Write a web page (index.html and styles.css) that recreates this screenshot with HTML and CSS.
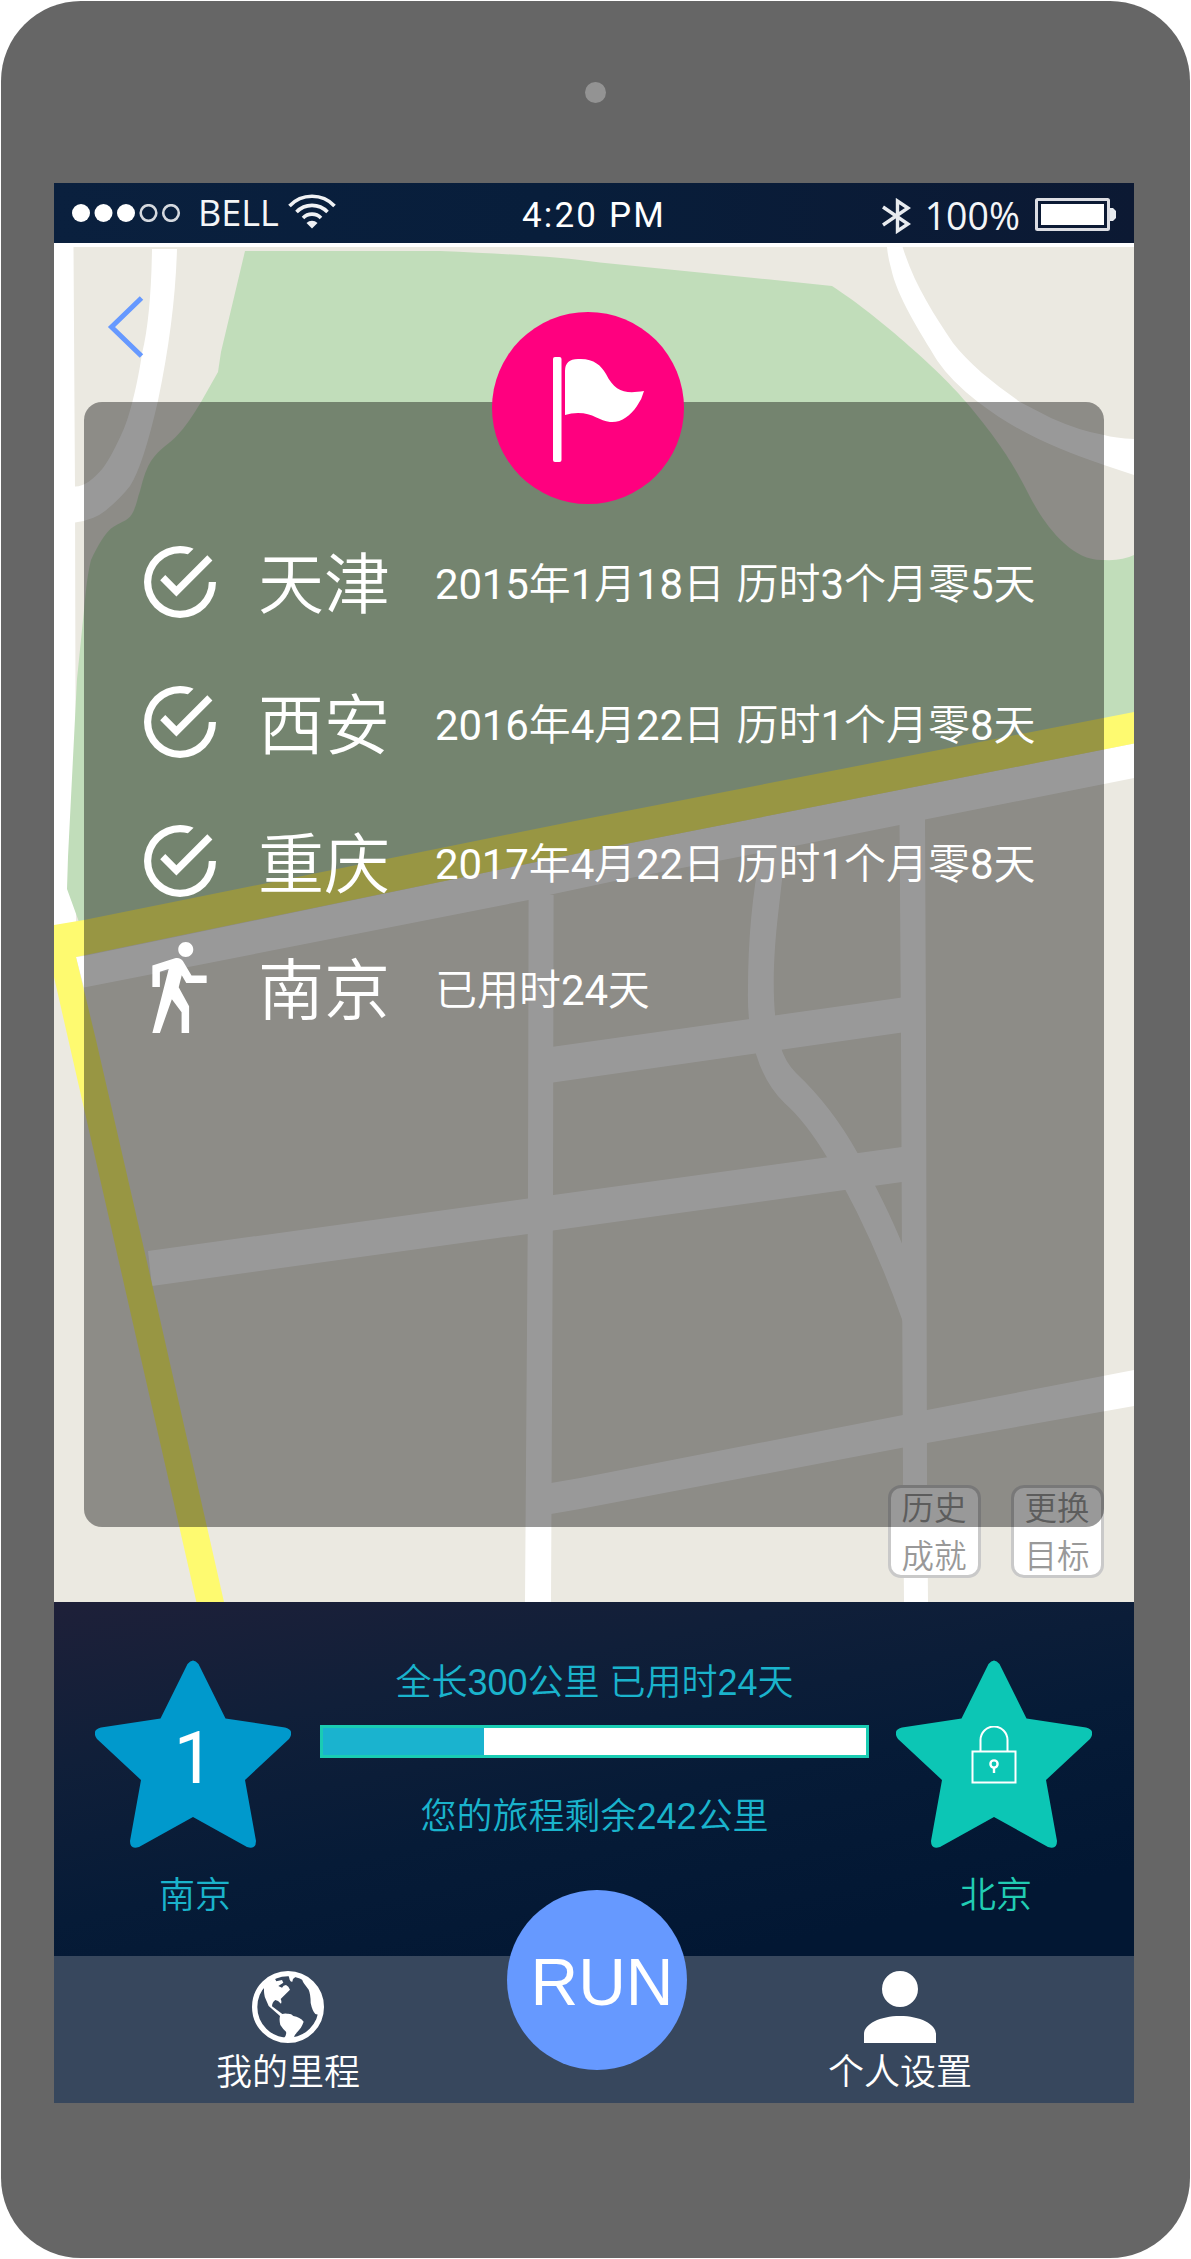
FILE: index.html
```html
<!DOCTYPE html>
<html lang="zh-CN">
<head>
<meta charset="utf-8">
<title>历史成就</title>
<link rel="stylesheet" href="styles.css">
</head>
<body>
<div class="phone">
  <span class="camera"></span>
  <main class="screen">
    <header class="status">
      <div class="status-left">
        <svg class="signal" width="110" height="18" viewBox="0 0 110 18">
          <g fill="#fff"><circle cx="9" cy="9" r="9"/><circle cx="31.500" cy="9" r="9"/><circle cx="54" cy="9" r="9"/></g>
          <g fill="none" stroke="#d5d9df" stroke-width="2.600"><circle cx="76.500" cy="9" r="7.800"/><circle cx="99" cy="9" r="7.800"/></g>
        </svg>
        <span class="carrier">BELL</span>
        <svg class="wifi" width="48" height="36" viewBox="0 0 48 36">
          <g fill="none" stroke="#f0f2f5" stroke-width="3.600">
            <path d="M1.500 13A31 31 0 0 1 46.500 13"/><path d="M8.500 19A21.500 21.500 0 0 1 39.500 19"/><path d="M15 25A12.500 12.500 0 0 1 33 25"/>
          </g>
          <path d="M24 35.500L18.500 30A8 8 0 0 1 29.500 30Z" fill="#f0f2f5"/>
        </svg>
      </div>
      <div class="time">4:20 PM</div>
      <div class="status-right">
        <svg class="bluetooth" width="30" height="36" viewBox="0 0 30 36"><path d="M2 9L27 26L16.500 33V3L27 10L2 27" fill="none" stroke="#e8ebef" stroke-width="3.400"/></svg>
        <span class="percent">100%</span>
        <svg class="battery" width="81" height="33" viewBox="0 0 81 33">
          <rect x="1.500" y="1.500" width="72" height="30" rx="1" fill="none" stroke="#dcdde3" stroke-width="3"/>
          <rect x="6" y="6" width="63" height="21" fill="#fff"/>
          <path d="M75 10H78L81 13V20L78 23H75Z" fill="#e8ebef"/>
        </svg>
      </div>
    </header>

    <section class="map">
      <svg class="map-art" viewBox="54 243 1080 1359" width="1080" height="1359">
        <rect x="54" y="243" width="1080" height="1359" fill="#ebe9e1"/>
        <path d="M54 243H1134V247H73.500L75 490L76 930L54 930Z" fill="#fff"/>
        <path d="M245 251H440C510 254 560 257 600 262.500L770 279.600L832 286C880 317 945 376 966 402C1000 442 1015 467 1028 493C1042 521 1070 562 1104 560Q1122 561 1134 555V720L79 922L67 889L68 857L77 679L84 610Q87 575 91 560C98 545 105 534 111 528.600C119 522 127 522 132 514C137 505 137 499 140 491Q145 470 151 461C160 448 170 444 178 434.600Q188 424 201 402L218 372L221 352Z" fill="#c1ddba"/>
        <g fill="#fff">
          <path d="M152 249Q151 317 142 353.600C138 382 130 415 124 428.600Q112 456 103 468Q87 487 75 486.500V522.500Q94 520 105 511Q120 499 130 486Q143 466 157.700 402Q175 320 177 249Z"/>
          <path d="M887 247Q888 258 891 268C897 297 920 332 937.500 361Q951 381 978 402C1018 433 1060 450 1104 465L1134 475V439Q1115 438 1104 435Q1080 431 1051 418L1020 402Q1001 389 982 373Q963 356 953 343C933 313 914 284 902.600 247Z"/>
          <path d="M84 956L580 853L1134 743.600V778L1104 784L925 819.600L899.500 825L751 854.600L610 882L553.600 894L528.600 900L84 987.500L76 957Z"/>
          <path d="M528.600 895H553.600L553 1193L551 1602H525L528 1193Z"/>
          <path d="M899.500 820L925 815L926 1040L927 1480L928 1602H904L903 1480L901 1040Z"/>
          <path d="M553 1046.700L902 997.500V1032.500L553 1082.500Z"/>
          <path d="M148 1251L902 1147V1182L152 1286Z"/>
          <path d="M551 1483L580 1478L903 1415L927 1410L1134 1370V1406L927 1443L580 1509L551 1514Z"/>
          <path d="M761 850Q748 915 748 989Q747 1026 756 1054Q765 1084 785 1103.600Q805 1121 827.500 1158Q870 1229 903 1322V1246Q886 1204 857.500 1153Q832 1107 796 1073Q785 1062 780 1045C770 1005 774 951 778 915L786 845Z"/>
        </g>
        <path d="M54 925L84 920L580 820L1134 712V743.600L580 853L76 957L96 1040L152.500 1286L207 1527L224 1602H196.400L84 1108.400L54 977Z" fill="#fefa70"/>
      </svg>

      <svg class="back" width="40" height="62" viewBox="0 0 40 62"><path d="M35.500 2L5.500 31L35.500 60" fill="none" stroke="#6699ff" stroke-width="5"/></svg>

      <div class="map-actions">
        <button class="map-button">历史<br>成就</button>
        <button class="map-button">更换<br>目标</button>
      </div>

      <div class="card">
        <div class="flag-badge">
          <svg width="94" height="108" viewBox="0 0 94 108">
            <rect x="1" y="2" width="8.500" height="105" rx="2" fill="#fff"/>
            <path d="M13 16Q13 4 26 4C41 3 49 10 54 19C63 37 73 39 92 36Q90 44 85 51C78 61 69 68 58 67C48 66 41 58 26 58Q19 58 13 60Z" fill="#fff"/>
          </svg>
        </div>
        <ul class="trips">
          <li class="trip">
            <svg class="check" viewBox="2 2 20 20"><path d="M20,12A8,8 0 0,1 12,20A8,8 0 0,1 4,12A8,8 0 0,1 12,4C12.760,4 13.500,4.110 14.200,4.310L15.770,2.740C14.610,2.260 13.340,2 12,2A10,10 0 0,0 2,12A10,10 0 0,0 12,22A10,10 0 0,0 22,12M7.910,10.080L6.500,11.500L11,16L21,6L19.590,4.580L11,13.170Z"/></svg>
            <span class="city">天津</span><span class="date"><span class="num">2015</span>年<span class="num">1</span>月<span class="num">18</span>日 历时<span class="num">3</span>个月零<span class="num">5</span>天</span>
          </li>
          <li class="trip">
            <svg class="check" viewBox="2 2 20 20"><path d="M20,12A8,8 0 0,1 12,20A8,8 0 0,1 4,12A8,8 0 0,1 12,4C12.760,4 13.500,4.110 14.200,4.310L15.770,2.740C14.610,2.260 13.340,2 12,2A10,10 0 0,0 2,12A10,10 0 0,0 12,22A10,10 0 0,0 22,12M7.910,10.080L6.500,11.500L11,16L21,6L19.590,4.580L11,13.170Z"/></svg>
            <span class="city">西安</span><span class="date"><span class="num">2016</span>年<span class="num">4</span>月<span class="num">22</span>日 历时<span class="num">1</span>个月零<span class="num">8</span>天</span>
          </li>
          <li class="trip">
            <svg class="check" viewBox="2 2 20 20"><path d="M20,12A8,8 0 0,1 12,20A8,8 0 0,1 4,12A8,8 0 0,1 12,4C12.760,4 13.500,4.110 14.200,4.310L15.770,2.740C14.610,2.260 13.340,2 12,2A10,10 0 0,0 2,12A10,10 0 0,0 12,22A10,10 0 0,0 22,12M7.910,10.080L6.500,11.500L11,16L21,6L19.590,4.580L11,13.170Z"/></svg>
            <span class="city">重庆</span><span class="date"><span class="num">2017</span>年<span class="num">4</span>月<span class="num">22</span>日 历时<span class="num">1</span>个月零<span class="num">8</span>天</span>
          </li>
          <li class="trip">
            <svg class="walk" viewBox="6 0.200 13 21.800"><path d="M14.120,10H19V8.200H15.380L13.380,4.870C13.080,4.370 12.540,4.030 11.920,4.030C11.740,4.030 11.580,4.060 11.420,4.110L6,5.800V11H7.800V7.330L9.910,6.670L6,22H7.800L10.670,13.890L13,17V22H14.800V15.590L12.310,11.050L13.040,8.180M14,3.800C15,3.800 15.800,3 15.800,2C15.800,1 15,0.200 14,0.200C13,0.200 12.200,1 12.200,2C12.200,3 13,3.800 14,3.800Z"/></svg>
            <span class="city">南京</span><span class="date">已用时<span class="num">24</span>天</span>
          </li>
        </ul>
      </div>
    </section>

    <section class="journey">
      <div class="stop stop-from">
        <div class="star">
          <svg class="star-shape" viewBox="0 0 196 188"><path d="M92.500 4Q98 -3 103.500 4L130.500 58.500L190 67.500Q200 70 194 79L150 120L161 181Q161 190 152 187L98 157L44 187Q35 190 35 181L46 120L2 79Q-4 70 6 67.500L65.500 58.500Z"/></svg>
          <span class="star-number">1</span>
        </div>
        <div class="stop-name">南京</div>
      </div>
      <div class="progress">
        <div class="progress-text">全长300公里 已用时24天</div>
        <div class="bar"><div class="bar-fill"></div></div>
        <div class="progress-text rest">您的旅程剩余242公里</div>
      </div>
      <div class="stop stop-to">
        <div class="star">
          <svg class="star-shape" viewBox="0 0 196 188"><path d="M92.500 4Q98 -3 103.500 4L130.500 58.500L190 67.500Q200 70 194 79L150 120L161 181Q161 190 152 187L98 157L44 187Q35 190 35 181L46 120L2 79Q-4 70 6 67.500L65.500 58.500Z"/></svg>
          <svg class="lock" width="46" height="58" viewBox="0 0 46 58"><g fill="none" stroke="#fff" stroke-width="2"><rect x="1.500" y="25.500" width="43" height="31"/><path d="M9.500 25V14A13.500 13.500 0 0 1 36.500 14V25"/><circle cx="23" cy="38" r="3.600" stroke-width="2.400"/><path d="M23 41.500V47" stroke-width="2.400"/></g></svg>
        </div>
        <div class="stop-name">北京</div>
      </div>
    </section>

    <nav class="tabs">
      <a class="tab tab-miles">
        <svg class="tab-icon" viewBox="12 12 216 216">
          <circle cx="120" cy="120" r="100" fill="none" stroke="#fff" stroke-width="16"/>
          <g fill="#fff">
            <path d="M46 58L70 38L95 26H122L125 38Q128 46 133 44L135 36L145 28L120 18L80 22L52 44ZM48 56Q47 82 52 94L62 117L96 147Q93 158 97 174Q106 188 114 194Q117 204 106 216H136Q138 204 148 195Q160 183 163 174L167 164Q156 150 136 147Q130 139 118 140Q108 139 103 141L72 118Q72 106 82 99Q90 100 99 110Q102 104 98 96L126 68Q122 57 114 54Q106 54 102 62L91 57L106 47L102 39L85 43L80 34Z"/>
            <path d="M161 30Q163 42 167 48L182 68Q188 82 188 108Q193 132 202 141L214 144L222 110L212 76L188 44Z"/>
          </g>
        </svg>
        <span>我的里程</span>
      </a>
      <a class="tab tab-me">
        <svg class="tab-icon" viewBox="4 4 16 16"><path fill="#fff" d="M12,4A4,4 0 0,1 16,8A4,4 0 0,1 12,12A4,4 0 0,1 8,8A4,4 0 0,1 12,4M12,14C16.420,14 20,15.790 20,18V20H4V18C4,15.790 7.580,14 12,14Z"/></svg>
        <span>个人设置</span>
      </a>
      <button class="run">RUN</button>
    </nav>
  </main>
</div>
</body>
</html>
```
FILE: styles.css
```css
* { box-sizing: border-box; }

body {
  margin: 0;
  background: #fff;
  font-family: "Liberation Sans", "Noto Sans CJK SC", sans-serif;
  font-weight: 350;
}

button {
  font: inherit;
  padding: 0;
  margin: 0;
}

.phone {
  position: relative;
  width: 1189px;
  height: 2257px;
  margin: 1px;
  padding: 182px 0 0 53px;
  border-radius: 80px;
  background: #666;
}

.camera {
  position: absolute;
  left: 584px;
  top: 81px;
  width: 21px;
  height: 21px;
  border-radius: 50%;
  background: #939393;
}

.screen {
  display: flex;
  flex-direction: column;
  width: 1080px;
  height: 1920px;
}

/* Status bar */
.status {
  display: grid;
  grid-template-columns: 1fr auto 1fr;
  align-items: center;
  height: 60px;
  padding: 0 18px;
  color: #f4f6f8;
  background: linear-gradient(90deg, #0a203e, #081e3b 45%, #0c1933);
}

.status-left,
.status-right {
  display: flex;
  align-items: center;
  font-family: "Open Sans", sans-serif;
  font-weight: 500;
}

.status-right { justify-content: flex-end; }

.carrier {
  width: 81px;
  margin: 0 9px 0 16px;
  font-size: 36px;
  line-height: 60px;
}

.wifi { margin-top: -5px; }

.time {
  padding-top: 5px;
  font-family: Roboto, sans-serif;
  font-weight: 400;
  font-size: 35px;
  letter-spacing: 2.2px;
  color: #fff;
}

.bluetooth { margin-top: 6px; }

.percent {
  margin: 4px 15px 0 14px;
  font-size: 37.5px;
  line-height: 55px;
}

.battery { margin-top: 3px; }

/* Map with the achievements card */
.map {
  position: relative;
  height: 1359px;
  padding: 159px 30px 0;
}

.map-art {
  position: absolute;
  inset: 0;
}

.back {
  position: absolute;
  left: 52px;
  top: 53px;
}

.map-actions {
  position: absolute;
  right: 30px;
  top: 1242px;
  display: flex;
  gap: 30px;
}

.map-button {
  width: 93px;
  height: 93px;
  padding: 2px 1px 0 0;
  border: 3px solid #c9c9c9;
  border-radius: 13px;
  background: #fff;
  color: #999;
  font-size: 32.5px;
  line-height: 48px;
  display: flex;
  align-items: center;
  justify-content: center;
}

.card {
  position: relative;
  height: 1125px;
  padding: 109px 60px 0;
  border-radius: 18px;
  background: rgba(0, 0, 0, .4);
}

.flag-badge {
  position: absolute;
  left: 408px;
  top: -90px;
  width: 192px;
  height: 192px;
  padding: 43px 0 0 60px;
  border-radius: 50%;
  background: #ff007f;
}

.trips {
  display: grid;
  grid-template-rows: 141px 140px 138px 114px;
  margin: 0;
  padding: 0;
  list-style: none;
  color: #fff;
}

.trip {
  display: grid;
  grid-template-columns: 114px 177px 1fr;
  align-items: center;
  white-space: nowrap;
}

.check,
.walk {
  fill: #fff;
}

.check {
  width: 72px;
  height: 72px;
}

.walk {
  width: 55px;
  height: 91px;
  margin-left: 8px;
}

.city {
  padding-top: 7px;
  font-size: 66px;
  line-height: 90px;
}

.date {
  padding-top: 7px;
  font-size: 42px;
  line-height: 60px;
}

.num {
  font-family: Roboto, sans-serif;
  font-weight: 400;
  letter-spacing: -.2px;
}

/* Journey progress */
.journey {
  display: grid;
  grid-template-columns: 196px 549px 196px;
  column-gap: 28px;
  height: 354px;
  padding: 58px 0 0 41px;
  background: linear-gradient(168deg, #1e2039 0%, #101f39 28%, #061b37 55%, #021733 85%);
}

.star {
  position: relative;
  display: flex;
  align-items: center;
  justify-content: center;
  height: 188px;
}

.star-shape {
  position: absolute;
  inset: 0;
  width: 196px;
  height: 188px;
}

.stop-from .star-shape { fill: #0099cc; }
.stop-to .star-shape { fill: #0cc6b5; }

.star-number {
  position: relative;
  padding: 10px 0 0 2px;
  font-family: Roboto, sans-serif;
  font-weight: 400;
  font-size: 72px;
  line-height: 80px;
  color: #fff;
}

.lock {
  position: relative;
  margin-top: 1px;
}

.stop-name {
  margin-top: 21px;
  padding-left: 4px;
  text-align: center;
  font-size: 36px;
  line-height: 54px;
}

.stop-from .stop-name { color: #1ab3cc; }
.stop-to .stop-name { color: #21cdb3; }

.progress {
  padding-left: 1px;
  margin-right: -1px;
  color: #1ab3cc;
  text-align: center;
  font-size: 36px;
  line-height: 54px;
}

.progress-text { 
  height: 65px;
  margin-top: -4px;
  margin-bottom: 4px;
}

.bar {
  height: 33px;
  border: 3px solid #1accb3;
  background: #fff;
}

.bar-fill {
  width: 161px;
  height: 100%;
  background: #1ab3cf;
}

.rest {
  margin-top: 0;
  padding-top: 32px;
}

/* Tab bar */
.tabs {
  position: relative;
  display: grid;
  grid-template-columns: 144px 144px;
  column-gap: 468px;
  height: 147px;
  padding: 15px 0 0 162px;
  color: #fff;
  background: #37475d;
}

.tab {
  display: flex;
  flex-direction: column;
  align-items: center;
  gap: 3px;
  font-size: 36px;
  line-height: 54px;
}

.tab-icon {
  width: 72px;
  height: 72px;
}

.run {
  position: absolute;
  left: 453px;
  top: -66px;
  width: 180px;
  height: 180px;
  padding: 3px 0 0 10px;
  border: 0;
  border-radius: 50%;
  background: #6699ff;
  color: #fff;
  font-size: 66px;
}
```
